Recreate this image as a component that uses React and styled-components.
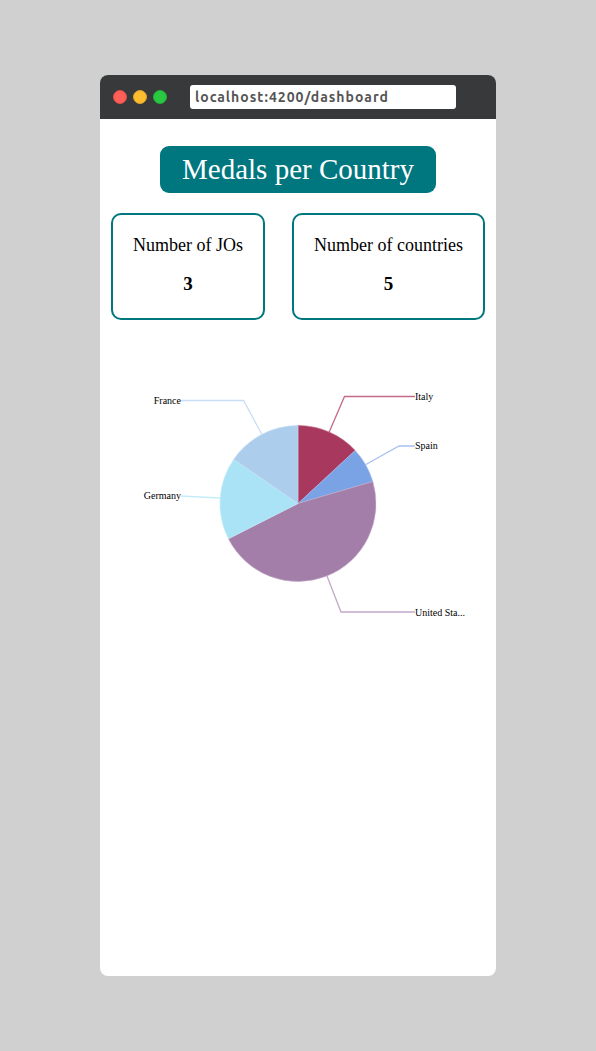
import React from "react";
import styled, { createGlobalStyle } from "styled-components";

const GlobalStyle = createGlobalStyle`
  * { box-sizing: border-box; }
  body {
    margin: 0;
    background: #d0d0d0;
    color: #000;
    font-family: "Liberation Serif", "Times New Roman", serif;
  }
`;

const Page = styled.div`
  min-height: 100vh;
  padding: 75px 100px;
  display: flex;
`;

const BrowserWindow = styled.div`
  flex: 1;
  min-width: 0;
  display: flex;
  flex-direction: column;
  background: #fff;
  border-radius: 8px;
  overflow: hidden;
`;

const TitleBar = styled.header`
  display: flex;
  align-items: center;
  gap: 23px;
  height: 44px;
  padding: 0 40px 0 13px;
  background: #38393b;
`;

const WindowControls = styled.div`
  display: flex;
  gap: 6px;
`;

const WindowButton = styled.button`
  width: 14px;
  height: 14px;
  padding: 0;
  border: 1px solid ${(p) => p.$edge};
  border-radius: 50%;
  background: ${(p) => p.$color};
`;

const AddressInput = styled.input`
  flex: 1;
  min-width: 0;
  height: 24px;
  padding: 0 5px;
  border: 0;
  border-radius: 3px;
  background: #fff;
  color: #555;
  font: 600 14px "Ubuntu", "Noto Sans", sans-serif;
  letter-spacing: 1px;
`;

const Dashboard = styled.main`
  display: flex;
  flex-direction: column;
  align-items: center;
  padding: 27px 11px;
`;

const Title = styled.h1`
  margin: 0 0 20px;
  padding: 0 22px;
  border-radius: 9px;
  background: #00767f;
  color: #fff;
  font-size: 29px;
  font-weight: 400;
  line-height: 47px;
`;

const Stats = styled.section`
  display: flex;
  justify-content: center;
  gap: 27px;
  margin-bottom: 40px;
`;

const StatCard = styled.article`
  padding: 18px 20px 22px;
  border: 2px solid #00767f;
  border-radius: 10px;
  text-align: center;
  white-space: nowrap;
`;

const StatLabel = styled.h2`
  margin: 0 0 15px;
  font-size: 18px;
  font-weight: 400;
  line-height: 24px;
`;

const StatValue = styled.p`
  margin: 0;
  font-size: 19px;
  font-weight: 700;
  line-height: 24px;
`;

const Chart = styled.svg`
  width: 100%;
  max-width: 374px;
  height: auto;
`;

const SliceLabel = styled.text`
  font-size: 10px;
  fill: #000;
`;

const CENTER = { x: 187, y: 143.5 };
const RADIUS = 78;

const countries = [
  { name: "Italy", medals: 96, color: "#a8385d", edge: "#c26a88", line: "218,72.5 233.5,36.5 304,36.5", x: 304, y: 40 },
  { name: "Spain", medals: 54, color: "#7aa3e5", edge: "#a9c2ef", line: "254,105 288,86 304,86", x: 304, y: 89 },
  { name: "United Sta...", medals: 345, color: "#a27ea8", edge: "#c4a8c9", line: "216,216 230,252 304,252", x: 304, y: 256 },
  { name: "Germany", medals: 125, color: "#aae3f5", edge: "#c5edf9", line: "109,138 70,136", x: 70, y: 139, anchor: "end" },
  { name: "France", medals: 113, color: "#adcded", edge: "#c7def5", line: "151,74.5 132.5,40.5 70,40.5", x: 70, y: 44, anchor: "end" },
];

const total = countries.reduce((sum, c) => sum + c.medals, 0);

function pointAt(fraction) {
  const angle = fraction * Math.PI * 2;
  return `${(CENTER.x + RADIUS * Math.sin(angle)).toFixed(2)} ${(CENTER.y - RADIUS * Math.cos(angle)).toFixed(2)}`;
}

let running = 0;
const slices = countries.map((country) => {
  const start = running / total;
  running += country.medals;
  const end = running / total;
  const large = end - start > 0.5 ? 1 : 0;
  return {
    ...country,
    path: `M${CENTER.x} ${CENTER.y}L${pointAt(start)}A${RADIUS} ${RADIUS} 0 ${large} 1 ${pointAt(end)}Z`,
  };
});

function MedalsChart() {
  return (
    <Chart viewBox="0 0 374 280" role="img" aria-label="Medals per country">
      {slices.map((s) => (
        <path key={s.name} d={s.path} fill={s.color} stroke={s.edge} strokeWidth="0.6" />
      ))}
      {slices.map((s) => (
        <g key={s.name}>
          <polyline points={s.line} fill="none" stroke={s.edge} strokeWidth="1.3" />
          <SliceLabel x={s.x} y={s.y} textAnchor={s.anchor || "start"}>
            {s.name}
          </SliceLabel>
        </g>
      ))}
    </Chart>
  );
}

export default function App() {
  return (
    <>
      <GlobalStyle />
      <Page>
        <BrowserWindow>
          <TitleBar>
            <WindowControls>
              <WindowButton aria-label="Close" $color="#ff5f57" $edge="#e0504a" />
              <WindowButton aria-label="Minimize" $color="#febc2e" $edge="#dea52c" />
              <WindowButton aria-label="Maximize" $color="#28c840" $edge="#27ae3b" />
            </WindowControls>
            <AddressInput aria-label="Address" defaultValue="localhost:4200/dashboard" spellCheck={false} />
          </TitleBar>
          <Dashboard>
            <Title>Medals per Country</Title>
            <Stats>
              <StatCard>
                <StatLabel>Number of JOs</StatLabel>
                <StatValue>3</StatValue>
              </StatCard>
              <StatCard>
                <StatLabel>Number of countries</StatLabel>
                <StatValue>5</StatValue>
              </StatCard>
            </Stats>
            <MedalsChart />
          </Dashboard>
        </BrowserWindow>
      </Page>
    </>
  );
}
